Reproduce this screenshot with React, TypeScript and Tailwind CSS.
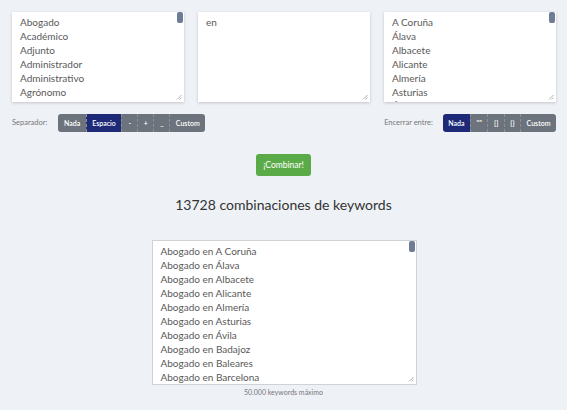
import React from "react";

const oficios = ["Abogado", "Académico", "Adjunto", "Administrador", "Administrativo", "Agrónomo", "Alcalde"];
const provincias = ["A Coruña", "Álava", "Albacete", "Alicante", "Almería", "Asturias", "Ávila"];
const combos = [
  "A Coruña", "Álava", "Albacete", "Alicante", "Almería", "Asturias", "Ávila", "Badajoz", "Baleares", "Barcelona", "Burgos",
].map((p) => "Abogado en " + p);

function Grip() {
  return (
    <svg className="absolute right-[2px] bottom-[2px]" width="6" height="6" viewBox="0 0 6 6">
      <path d="M5.5 1 L1 5.5 M5.5 3.5 L3.5 5.5" stroke="#9aa0a8" strokeWidth="0.8" />
    </svg>
  );
}

function Box({ lines, className, pad = "pt-[3px]" }: { lines: string[]; className: string; pad?: string }) {
  return (
    <div className={"relative overflow-hidden bg-white " + className}>
      <div className={"pl-[8px] pr-[12px] text-[10px] leading-[14px] text-[#595959] " + pad}>
        {lines.map((l, i) => (
          <div key={i} className="whitespace-nowrap">{l}</div>
        ))}
      </div>
      <div className="absolute right-[1px] top-0 w-[6px] h-[11px] rounded-[2px] bg-[#6f7c96]" />
      <Grip />
    </div>
  );
}

function Group({ items, active }: { items: string[]; active: number }) {
  return (
    <div className="flex h-[18px] rounded-[3px] overflow-hidden">
      {items.map((it, i) => (
        <div
          key={i}
          className={
            "flex items-center justify-center min-w-[16px] px-[5.5px] text-[7px] leading-[10px] font-semibold text-white border-l border-dashed border-[#8a9199] first:border-l-0 " +
            (i === active ? "bg-[#1e2a78]" : "bg-[#6c737c]")
          }
        >
          {it}
        </div>
      ))}
    </div>
  );
}

export default function App() {
  return (
    <div className="w-[567px] h-[410px] bg-[#eef1f6] overflow-hidden" style={{ fontFamily: "Lato, 'Noto Sans', sans-serif" }}>
      <div className="grid grid-cols-3 gap-[14px] pl-[12px] pr-[11px] pt-[12px]">
        <Box lines={oficios} className="h-[90px] shadow-[0_1px_3px_rgba(0,0,0,0.18)]" />
        <div className="relative h-[90px] bg-white shadow-[0_1px_3px_rgba(0,0,0,0.18)]">
          <div className="pl-[8px] pt-[3px] text-[10px] leading-[14px] text-[#595959]">en</div>
          <Grip />
        </div>
        <Box lines={provincias} className="h-[90px] shadow-[0_1px_3px_rgba(0,0,0,0.18)]" />
      </div>

      <div className="flex items-center justify-between pl-[12px] pr-[11px] mt-[12px]">
        <div className="flex items-center gap-[11px]">
          <span className="text-[7.5px] leading-[10px] text-[#777]">Separador:</span>
          <Group items={["Nada", "Espacio", "-", "+", "_", "Custom"]} active={1} />
        </div>
        <div className="flex items-center gap-[10px]">
          <span className="text-[7.5px] leading-[10px] text-[#777]">Encerrar entre:</span>
          <Group items={["Nada", "\"\"", "[]", "{}", "Custom"]} active={0} />
        </div>
      </div>

      <div className="flex justify-center mt-[22px]">
        <div className="h-[22px] px-[7px] flex items-center rounded-[3px] bg-[#5aab47] text-white text-[8.5px]">¡Combinar!</div>
      </div>

      <div className="text-center text-[14px] text-[#333] mt-[19px] leading-[20px]">13728 combinaciones de keywords</div>

      <div className="flex justify-center mt-[25px] pl-[1px]">
        <Box lines={combos} pad="pt-[3px]" className="w-[265px] h-[145px] border border-[#cfd3d8]" />
      </div>
      <div className="text-center text-[7px] leading-[10px] text-[#777] mt-[2px]">50.000 keywords máximo</div>
    </div>
  );
}
